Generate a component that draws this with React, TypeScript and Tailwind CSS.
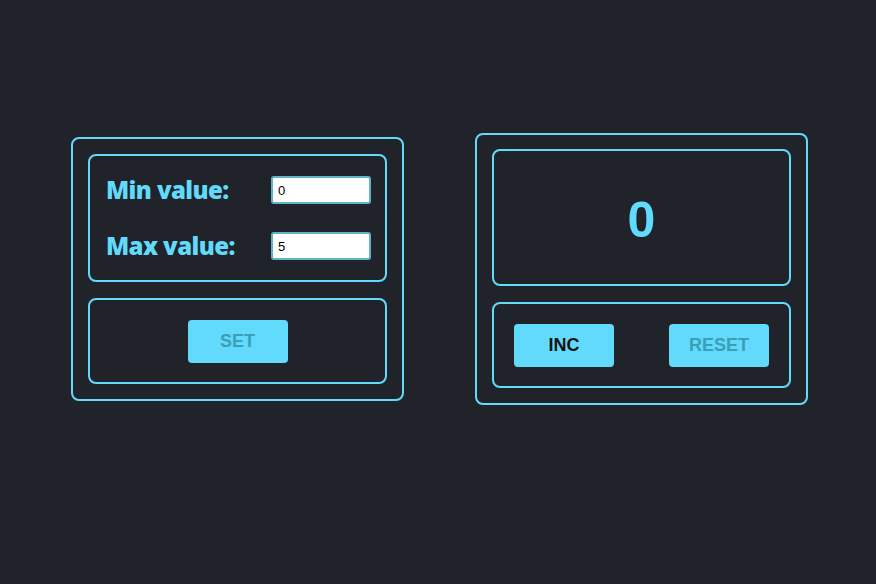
import { useState } from "react";

export default function App() {
    const [min] = useState("0");
    const [max] = useState("5");
    const [count] = useState(0);

    return (
        <div className="w-[876px] h-[584px] bg-[#20232a] flex items-center justify-center gap-[71px] pb-[46px] pl-[3px]">
            {/* settings */}
            <div className="w-[333px] border-2 border-[#61dafb] rounded-lg p-[15px] flex flex-col gap-4">
                <div className="h-[128px] border-2 border-[#61dafb] rounded-lg pl-4 pr-[14px] flex flex-col justify-center gap-[28px]">
                    <div className="flex items-center justify-between">
                        <span className="text-[24px] leading-[28px] font-extrabold text-[#61dafb] font-['Open_Sans',sans-serif] tracking-[-0.6px]">Min value:</span>
                        <input
                            type="number"
                            value={min}
                            readOnly
                            className="w-[100px] h-[28px] bg-white border-2 border-[#5fb3c6] rounded-[3px] px-[5px] text-[13px] text-black font-['Liberation_Sans',sans-serif] outline-none"
                        />
                    </div>
                    <div className="flex items-center justify-between">
                        <span className="text-[24px] leading-[28px] font-extrabold text-[#61dafb] font-['Open_Sans',sans-serif] tracking-[-0.6px]">Max value:</span>
                        <input
                            type="number"
                            value={max}
                            readOnly
                            className="w-[100px] h-[28px] bg-white border-2 border-[#5fb3c6] rounded-[3px] px-[5px] text-[13px] text-black font-['Liberation_Sans',sans-serif] outline-none"
                        />
                    </div>
                </div>
                <div className="h-[86px] border-2 border-[#61dafb] rounded-lg flex items-center justify-center">
                    <button
                        disabled
                        className="w-[100px] h-[43px] rounded bg-[#61dafb] text-[#3c9fb8] text-[18px] font-bold font-['Liberation_Sans',sans-serif]"
                    >
                        SET
                    </button>
                </div>
            </div>

            {/* counter */}
            <div className="w-[333px] border-2 border-[#61dafb] rounded-lg pt-[14px] pb-[15px] px-[15px] flex flex-col gap-4">
                <div className="h-[137px] border-2 border-[#61dafb] rounded-lg flex items-center justify-center pt-1">
                    <span className="text-[50px] font-bold text-[#61dafb] font-['Liberation_Sans',sans-serif] leading-none">{count}</span>
                </div>
                <div className="h-[86px] border-2 border-[#61dafb] rounded-lg px-5 flex items-center justify-between">
                    <button className="w-[100px] h-[43px] rounded bg-[#61dafb] text-[#111] text-[18px] font-bold font-['Liberation_Sans',sans-serif]">
                        INC
                    </button>
                    <button
                        disabled
                        className="w-[100px] h-[43px] rounded bg-[#61dafb] text-[#3c9fb8] text-[18px] font-bold font-['Liberation_Sans',sans-serif]"
                    >
                        RESET
                    </button>
                </div>
            </div>
        </div>
    );
}
